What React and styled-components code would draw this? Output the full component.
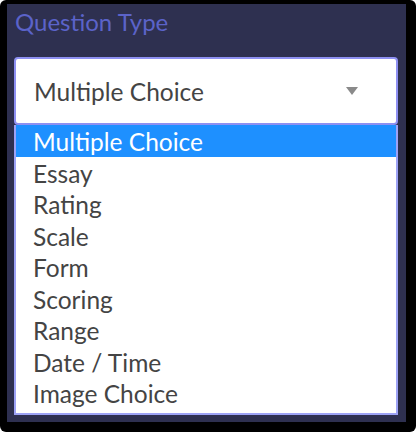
import React from "react";
import styled, { createGlobalStyle } from "styled-components";

const Global = createGlobalStyle`
  html, body { margin: 0; padding: 0; background: #ffffff; }
  body { font-family: Lato, "Open Sans", sans-serif; }
`;

const Frame = styled.div`
  width: 416px;
  height: 432px;
  box-sizing: border-box;
  background: #000;
  border-radius: 6px;
  padding: 4px 10px 10px 7px;
`;

const Panel = styled.div`
  height: 100%;
  box-sizing: border-box;
  background: #2e3050;
  padding: 0 8px 5px 7px;
  display: flex;
  flex-direction: column;
`;

const Label = styled.div`
  font-size: 24px;
  line-height: 28px;
  color: #5b63c9;
  padding: 4px 0 0 1px;
  height: 53px;
  box-sizing: border-box;
`;

const SelectBox = styled.div`
  height: 68px;
  box-sizing: border-box;
  background: #fff;
  border: 2px solid #8e90f2;
  border-radius: 4px;
  display: flex;
  align-items: center;
  justify-content: space-between;
  padding: 0 38px 0 18px;
  font-size: 24.5px;
  color: #444;
`;

const Arrow = styled.svg`
  width: 12px;
  height: 8px;
  display: block;
`;

const List = styled.ul`
  list-style: none;
  margin: 0;
  padding: 0 0 4px;
  background: #fff;
  border: 2px solid #9da2f5;
  border-top: none;
`;

const Item = styled.li`
  height: 31.5px;
  box-sizing: border-box;
  padding: 3px 0 0 17px;
  line-height: 28.5px;
  font-size: 24.5px;
  color: ${(p) => (p.$selected ? "#fff" : "#444")};
  background: ${(p) => (p.$selected ? "#1e90ff" : "transparent")};
`;

const options = [
  "Multiple Choice",
  "Essay",
  "Rating",
  "Scale",
  "Form",
  "Scoring",
  "Range",
  "Date / Time",
  "Image Choice",
];

export default function App() {
  return (
    <>
      <Global />
      <Frame>
        <Panel>
          <Label>Question Type</Label>
          <SelectBox>
            <span>Multiple Choice</span>
            <Arrow viewBox="0 0 12 8">
              <path d="M0 0 L12 0 L6 8 Z" fill="#8a8a8a" />
            </Arrow>
          </SelectBox>
          <List>
            {options.map((o, i) => (
              <Item key={o} $selected={i === 0}>
                {o}
              </Item>
            ))}
          </List>
        </Panel>
      </Frame>
    </>
  );
}
